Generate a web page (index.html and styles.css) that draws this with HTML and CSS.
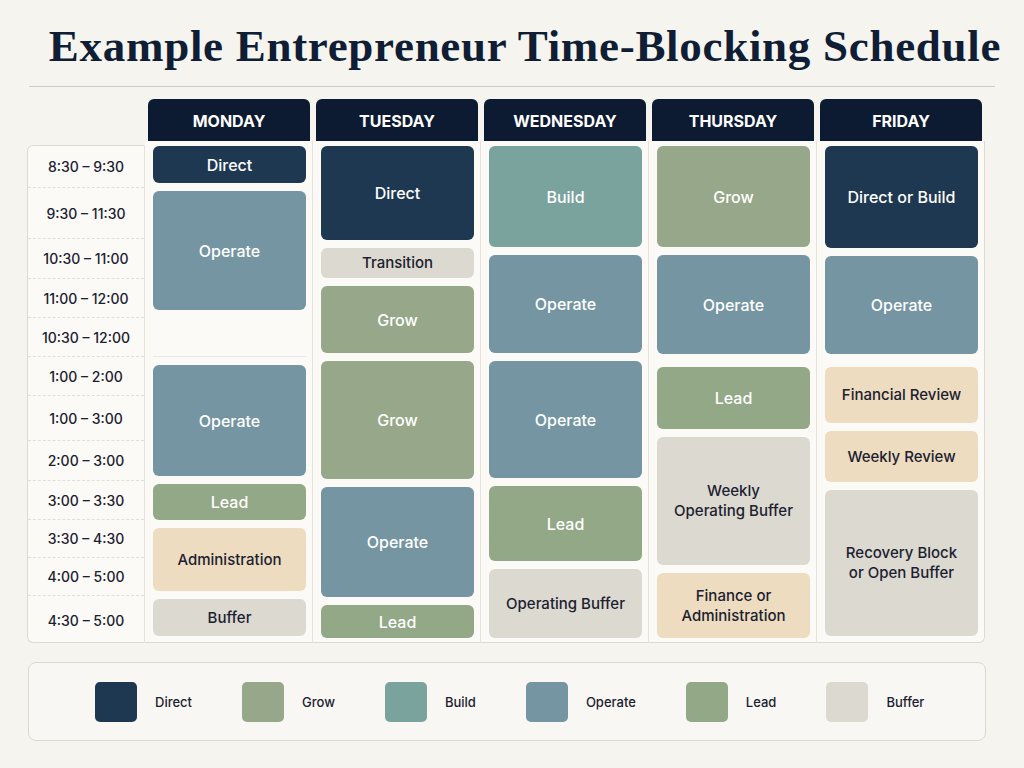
FILE: index.html
```html
<!DOCTYPE html>
<html lang="en">
<head>
  <meta charset="UTF-8" />
  <title>Example Entrepreneur Time-Blocking Schedule</title>
  <link rel="stylesheet" href="styles.css">
</head>
<body>
  <h1 class="title">Example Entrepreneur Time-Blocking Schedule</h1>
  <hr class="rule">

  <div class="schedule">
    <div class="corner"></div>
    <div class="day-head">MONDAY</div>
    <div class="day-head">TUESDAY</div>
    <div class="day-head">WEDNESDAY</div>
    <div class="day-head">THURSDAY</div>
    <div class="day-head">FRIDAY</div>

    <div class="times">
      <div class="time" style="height: 42px">8:30 – 9:30</div>
      <div class="time" style="height: 51px">9:30 – 11:30</div>
      <div class="time" style="height: 40px">10:30 – 11:00</div>
      <div class="time" style="height: 39px">11:00 – 12:00</div>
      <div class="time" style="height: 39px">10:30 – 12:00</div>
      <div class="time" style="height: 39px">1:00 – 2:00</div>
      <div class="time" style="height: 45px">1:00 – 3:00</div>
      <div class="time" style="height: 40px">2:00 – 3:00</div>
      <div class="time" style="height: 39px">3:00 – 3:30</div>
      <div class="time" style="height: 38px">3:30 – 4:30</div>
      <div class="time" style="height: 38px">4:00 – 5:00</div>
      <div class="time" style="height: 48px">4:30 – 5:00</div>
    </div>

    <div class="day">
      <div class="block direct" style="height: 37px">Direct</div>
      <div class="block operate" style="height: 119px">Operate</div>
      <div class="spacer" style="height: 38px"></div>
      <div class="block operate" style="height: 111px">Operate</div>
      <div class="block lead" style="height: 36px">Lead</div>
      <div class="block admin" style="height: 63px">Administration</div>
      <div class="block buffer" style="height: 37px">Buffer</div>
    </div>

    <div class="day">
      <div class="block direct" style="height: 94px">Direct</div>
      <div class="block buffer small" style="height: 30px">Transition</div>
      <div class="block grow" style="height: 67px">Grow</div>
      <div class="block grow" style="height: 118px">Grow</div>
      <div class="block operate" style="height: 110px">Operate</div>
      <div class="block lead" style="height: 33px">Lead</div>
    </div>

    <div class="day">
      <div class="block build" style="height: 101px">Build</div>
      <div class="block operate" style="height: 98px">Operate</div>
      <div class="block operate" style="height: 117px">Operate</div>
      <div class="block lead" style="height: 75px">Lead</div>
      <div class="block buffer" style="height: 69px">Operating Buffer</div>
    </div>

    <div class="day">
      <div class="block grow" style="height: 101px">Grow</div>
      <div class="block operate" style="height: 99px">Operate</div>
      <div class="block lead wide-gap" style="height: 62px">Lead</div>
      <div class="block buffer" style="height: 128px">Weekly<br>Operating Buffer</div>
      <div class="block admin" style="height: 65px">Finance or<br>Administration</div>
    </div>

    <div class="day last">
      <div class="block direct" style="height: 102px">Direct or Build</div>
      <div class="block operate" style="height: 98px">Operate</div>
      <div class="block admin wide-gap" style="height: 56px">Financial Review</div>
      <div class="block admin" style="height: 51px">Weekly Review</div>
      <div class="block buffer" style="height: 146px">Recovery Block<br>or Open Buffer</div>
    </div>
  </div>

  <div class="legend">
    <div class="legend-item"><span class="swatch direct"></span>Direct</div>
    <div class="legend-item"><span class="swatch grow"></span>Grow</div>
    <div class="legend-item"><span class="swatch build"></span>Build</div>
    <div class="legend-item"><span class="swatch operate"></span>Operate</div>
    <div class="legend-item"><span class="swatch lead"></span>Lead</div>
    <div class="legend-item"><span class="swatch buffer"></span>Buffer</div>
  </div>
</body>
</html>
```

FILE: styles.css
```css
body {
  margin: 0;
  background: #f6f4ef;
  font-family: Inter, "Noto Sans", sans-serif;
  color: #1b2130;
}
.title {
  margin: 0;
  padding: 20px 0 0 26px;
  font-family: "Liberation Serif", serif;
  font-size: 45px;
  line-height: 52px;
  font-weight: bold;
  text-align: center;
  color: #0f1d35;
  letter-spacing: 0.7px;
}
.rule {
  margin: 14px 29px 0 29px;
  border: 0;
  border-top: 1px solid #cfccc4;
}
.schedule {
  display: grid;
  grid-template-columns: 118px repeat(5, 168px);
  grid-template-rows: 42px 502px;
  margin: 12px 0 0 27px;
}
.day-head {
  margin: 0 3px;
  background: #0c1a32;
  color: #fff;
  border-radius: 6px 6px 0 0;
  font-weight: 700;
  font-size: 16px;
  padding-top: 2px;
  display: flex;
  align-items: center;
  justify-content: center;
}
.times {
  margin-top: 4px;
  background: #fbfaf7;
  border: 1px solid #dedad2;
  border-right: 1px solid #e6e2da;
  border-radius: 6px 0 0 6px;
}
.time {
  display: flex;
  align-items: center;
  justify-content: center;
  font-size: 14px;
  font-weight: 500;
  color: #1b2130;
  border-bottom: 1px dashed #e2dfd8;
  box-sizing: border-box;
}
.time:last-child { border-bottom: 0; }
.day {
  display: flex;
  flex-direction: column;
  gap: 8px;
  padding: 5px 6px 0 8px;
  background: #fbfaf7;
  border-right: 1px solid #e6e2da;
  border-bottom: 1px solid #dedad2;
}
.day.last {
  border-right: 1px solid #dedad2;
  border-radius: 0 0 6px 0;
}
.spacer {
  border-bottom: 1px solid #ebe8e1;
}
.block {
  flex: none;
  display: flex;
  align-items: center;
  justify-content: center;
  text-align: center;
  border-radius: 6px;
  font-size: 16px;
  font-weight: 500;
  line-height: 20px;
  color: #fff;
}
.block.wide-gap { margin-top: 5px; }
.block.small { font-size: 14px; }
.direct { background: #1f3851; }
.operate { background: #7495a1; }
.grow { background: #97a88a; }
.lead { background: #93a886; }
.build { background: #7aa39d; }
.buffer { background: #dcd9d0; color: #1b2130; }
.admin { background: #eddcc0; color: #1b2130; }
.block.buffer, .block.admin { font-size: 15px; }
.legend {
  margin: 19px 0 0 28px;
  width: 958px;
  height: 79px;
  border: 1px solid #dcd8cf;
  border-radius: 8px;
  background: #f8f7f3;
  display: flex;
  align-items: center;
  gap: 50px;
  padding-left: 66px;
  box-sizing: border-box;
}
.legend-item {
  display: flex;
  align-items: center;
  gap: 18px;
  font-size: 13px;
  font-weight: 500;
  color: #1b2130;
}
.swatch {
  width: 42px;
  height: 40px;
  border-radius: 5px;
}
```
